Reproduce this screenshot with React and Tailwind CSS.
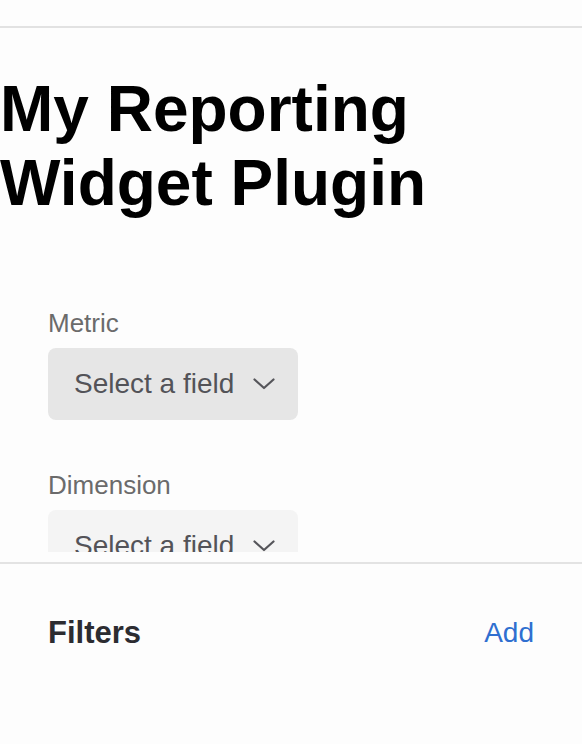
import React from "react";

function Chevron() {
  return (
    <svg width="22" height="12" viewBox="0 0 22 12" fill="none" className="shrink-0">
      <polyline points="1.5,1.5 11,10 20.5,1.5" stroke="#55555a" strokeWidth="2.2" strokeLinecap="round" strokeLinejoin="round" />
    </svg>
  );
}

function Field({ label, bg }) {
  return (
    <div className="flex flex-col">
      <div className="text-[26px] leading-[30px] text-[#6b6b6b] mb-[10px]">{label}</div>
      <div className={`w-[250px] h-[72px] shrink-0 rounded-[8px] ${bg} flex items-center justify-between pl-[26px] pr-[23px]`}>
        <span className="text-[28px] leading-none text-[#535358]">Select a field</span>
        <Chevron />
      </div>
    </div>
  );
}

export default function App() {
  return (
    <div className="w-[582px] h-[744px] bg-[#fdfdfd] flex flex-col overflow-hidden" style={{ fontFamily: '"Liberation Sans", Arial, sans-serif' }}>
      <div className="h-[26px] shrink-0" />
      <div className="h-[2px] bg-[#e2e2e2] shrink-0" />
      <div className="h-[524px] shrink-0 overflow-hidden">
        <h1 className="mt-[44px] text-[64px] leading-[74px] font-bold text-black">My Reporting<br />Widget Plugin</h1>
        <div className="mt-[88px] pl-[48px] flex flex-col gap-[50px]">
          <Field label="Metric" bg="bg-[#e6e6e6]" />
          <Field label="Dimension" bg="bg-[#f4f4f4]" />
        </div>
      </div>
      <div className="mt-[10px] h-[2px] bg-[#e3e3e3] shrink-0" />
      <div className="flex items-center justify-between px-[48px] pt-[52px]">
        <span className="text-[31px] leading-[34px] font-bold text-[#2c2c31]">Filters</span>
        <span className="text-[28px] leading-[34px] text-[#2f6fd0]">Add</span>
      </div>
    </div>
  );
}
